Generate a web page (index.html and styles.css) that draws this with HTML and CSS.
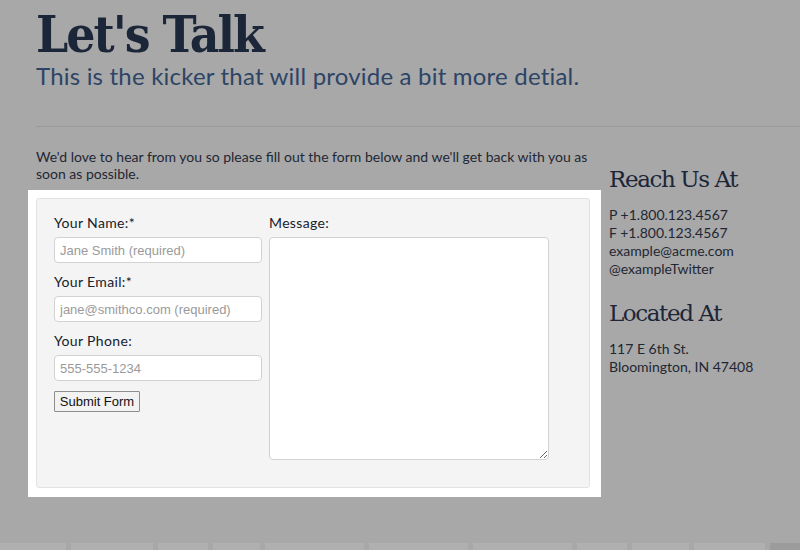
FILE: index.html
```html
<!DOCTYPE html>
<html>
<head>
<meta charset="utf-8">
<link rel="stylesheet" href="styles.css">
</head>
<body>
<div class="page">
  <header class="header">
    <h1 class="title">Let's Talk</h1>
    <p class="kicker">This is the kicker that will provide a bit more detial.</p>
  </header>
  <hr class="rule">
  <div class="content">
    <main class="main">
      <p class="intro">We'd love to hear from you so please fill out the form below and we'll get back with you as soon as possible.</p>
      <div class="spotlight">
        <form class="panel">
          <div class="fields">
            <label class="label">Your Name:*</label>
            <input class="input" type="text" placeholder="Jane Smith (required)">
            <label class="label">Your Email:*</label>
            <input class="input" type="text" placeholder="jane@smithco.com (required)">
            <label class="label">Your Phone:</label>
            <input class="input" type="text" placeholder="555-555-1234">
            <button class="submit" type="button">Submit Form</button>
          </div>
          <div class="message">
            <label class="label">Message:</label>
            <textarea class="textarea"></textarea>
          </div>
        </form>
      </div>
    </main>
    <aside class="side">
      <h2 class="side-title">Reach Us At</h2>
      <p class="side-text">P +1.800.123.4567<br>F +1.800.123.4567<br>example@acme.com<br>@exampleTwitter</p>
      <h2 class="side-title located">Located At</h2>
      <p class="side-text">117 E 6th St.<br>Bloomington, IN 47408</p>
    </aside>
  </div>
</div>
<div class="tabs">
  <span class="tab t1"></span>
  <span class="tab t2"></span>
  <span class="tab t3"></span>
  <span class="tab t4"></span>
  <span class="tab t5"></span>
  <span class="tab t6"></span>
  <span class="tab t7"></span>
  <span class="tab t8"></span>
  <span class="tab t9"></span>
  <span class="tab t10"></span>
  <span class="tab t11"></span>
</div>
</body>
</html>
```
FILE: styles.css
```css
* { box-sizing: border-box; }
html, body { margin: 0; padding: 0; }
body {
  background: #a8a8a8;
  font-family: Lato, "Noto Sans", sans-serif;
  color: #1f2733;
  width: 800px;
  height: 550px;
  overflow: hidden;
}
.page { height: 543px; }
.header { padding: 8px 0 0 36px; }
.title {
  margin: 0;
  font-family: "DejaVu Serif", serif;
  font-stretch: condensed;
  font-weight: bold;
  font-size: 51px;
  line-height: 52px;
  color: #1b2638;
  letter-spacing: -2px;
}
.kicker {
  margin: 2px 0 0;
  font-size: 24px;
  line-height: 28px;
  color: #2d4466;
  letter-spacing: 0.2px;
}
.rule {
  margin: 36px 0 0 36px;
  border: 0;
  border-top: 1px solid #9a9a9a;
  height: 0;
}
.content {
  display: flex;
  gap: 19px;
  padding-left: 36px;
  margin-top: 21px;
}
.main { width: 554px; }
.intro {
  margin: 0;
  font-size: 14px;
  line-height: 17px;
}
.spotlight {
  background: #fff;
  margin: 8px 0 0 -8px;
  padding: 8px 11px 9px 8px;
  width: 573px;
}
.panel {
  display: flex;
  gap: 7px;
  background: #f4f4f4;
  border: 1px solid #e2e2e2;
  border-radius: 3px;
  padding: 15px 40px 26px 17px;
  height: 290px;
}
.fields {
  width: 208px;
  display: flex;
  flex-direction: column;
}
.label {
  display: block;
  font-size: 14px;
  letter-spacing: 0.35px;
  line-height: 18px;
  color: #17202c;
  margin-bottom: 5px;
}
.input {
  width: 208px;
  height: 26px;
  border: 1px solid #d2d2d2;
  border-radius: 4px;
  background: #fff;
  padding: 0 5px;
  font-family: "Liberation Sans", Arial, sans-serif;
  font-size: 13px;
  margin-bottom: 10px;
}
.input::placeholder { color: #9a9a9a; }
.submit {
  align-self: flex-start;
  width: 86px;
  height: 21px;
  margin-top: 0;
  padding: 0;
  font-family: "Liberation Sans", Arial, sans-serif;
  font-size: 13px;
  color: #111;
  background: #f2f2f2;
  border: 1px solid #8e8e8e;
  border-radius: 1px;
}
.message { width: 280px; }
.textarea {
  display: block;
  width: 280px;
  height: 223px;
  border: 1px solid #d2d2d2;
  border-radius: 4px;
  background: #fff;
  resize: vertical;
  margin-top: 1px;
}
.side { width: 190px; padding-top: 16px; }
.side-title {
  margin: 0;
  font-family: "DejaVu Serif", serif;
  font-weight: normal;
  font-size: 23px;
  line-height: 30px;
  color: #1b2638;
  letter-spacing: -1.4px;
}
.side-text {
  margin: 12px 0 0;
  font-size: 14px;
  line-height: 18px;
}
.located { margin-top: 20px; }
.tabs {
  display: flex;
  height: 7px;
  gap: 5px;
}
.tab { background: #b0b0b0; height: 7px; }
.t1 { width: 67px; }
.t2 { width: 83px; }
.t3 { width: 50px; }
.t4 { width: 48px; }
.t5 { width: 100px; }
.t6 { width: 100px; }
.t7 { width: 100px; }
.t8 { width: 50px; }
.t9 { width: 58px; }
.t10 { width: 72px; }
.t11 { width: 30px; background: #9c9c9c; }
```
